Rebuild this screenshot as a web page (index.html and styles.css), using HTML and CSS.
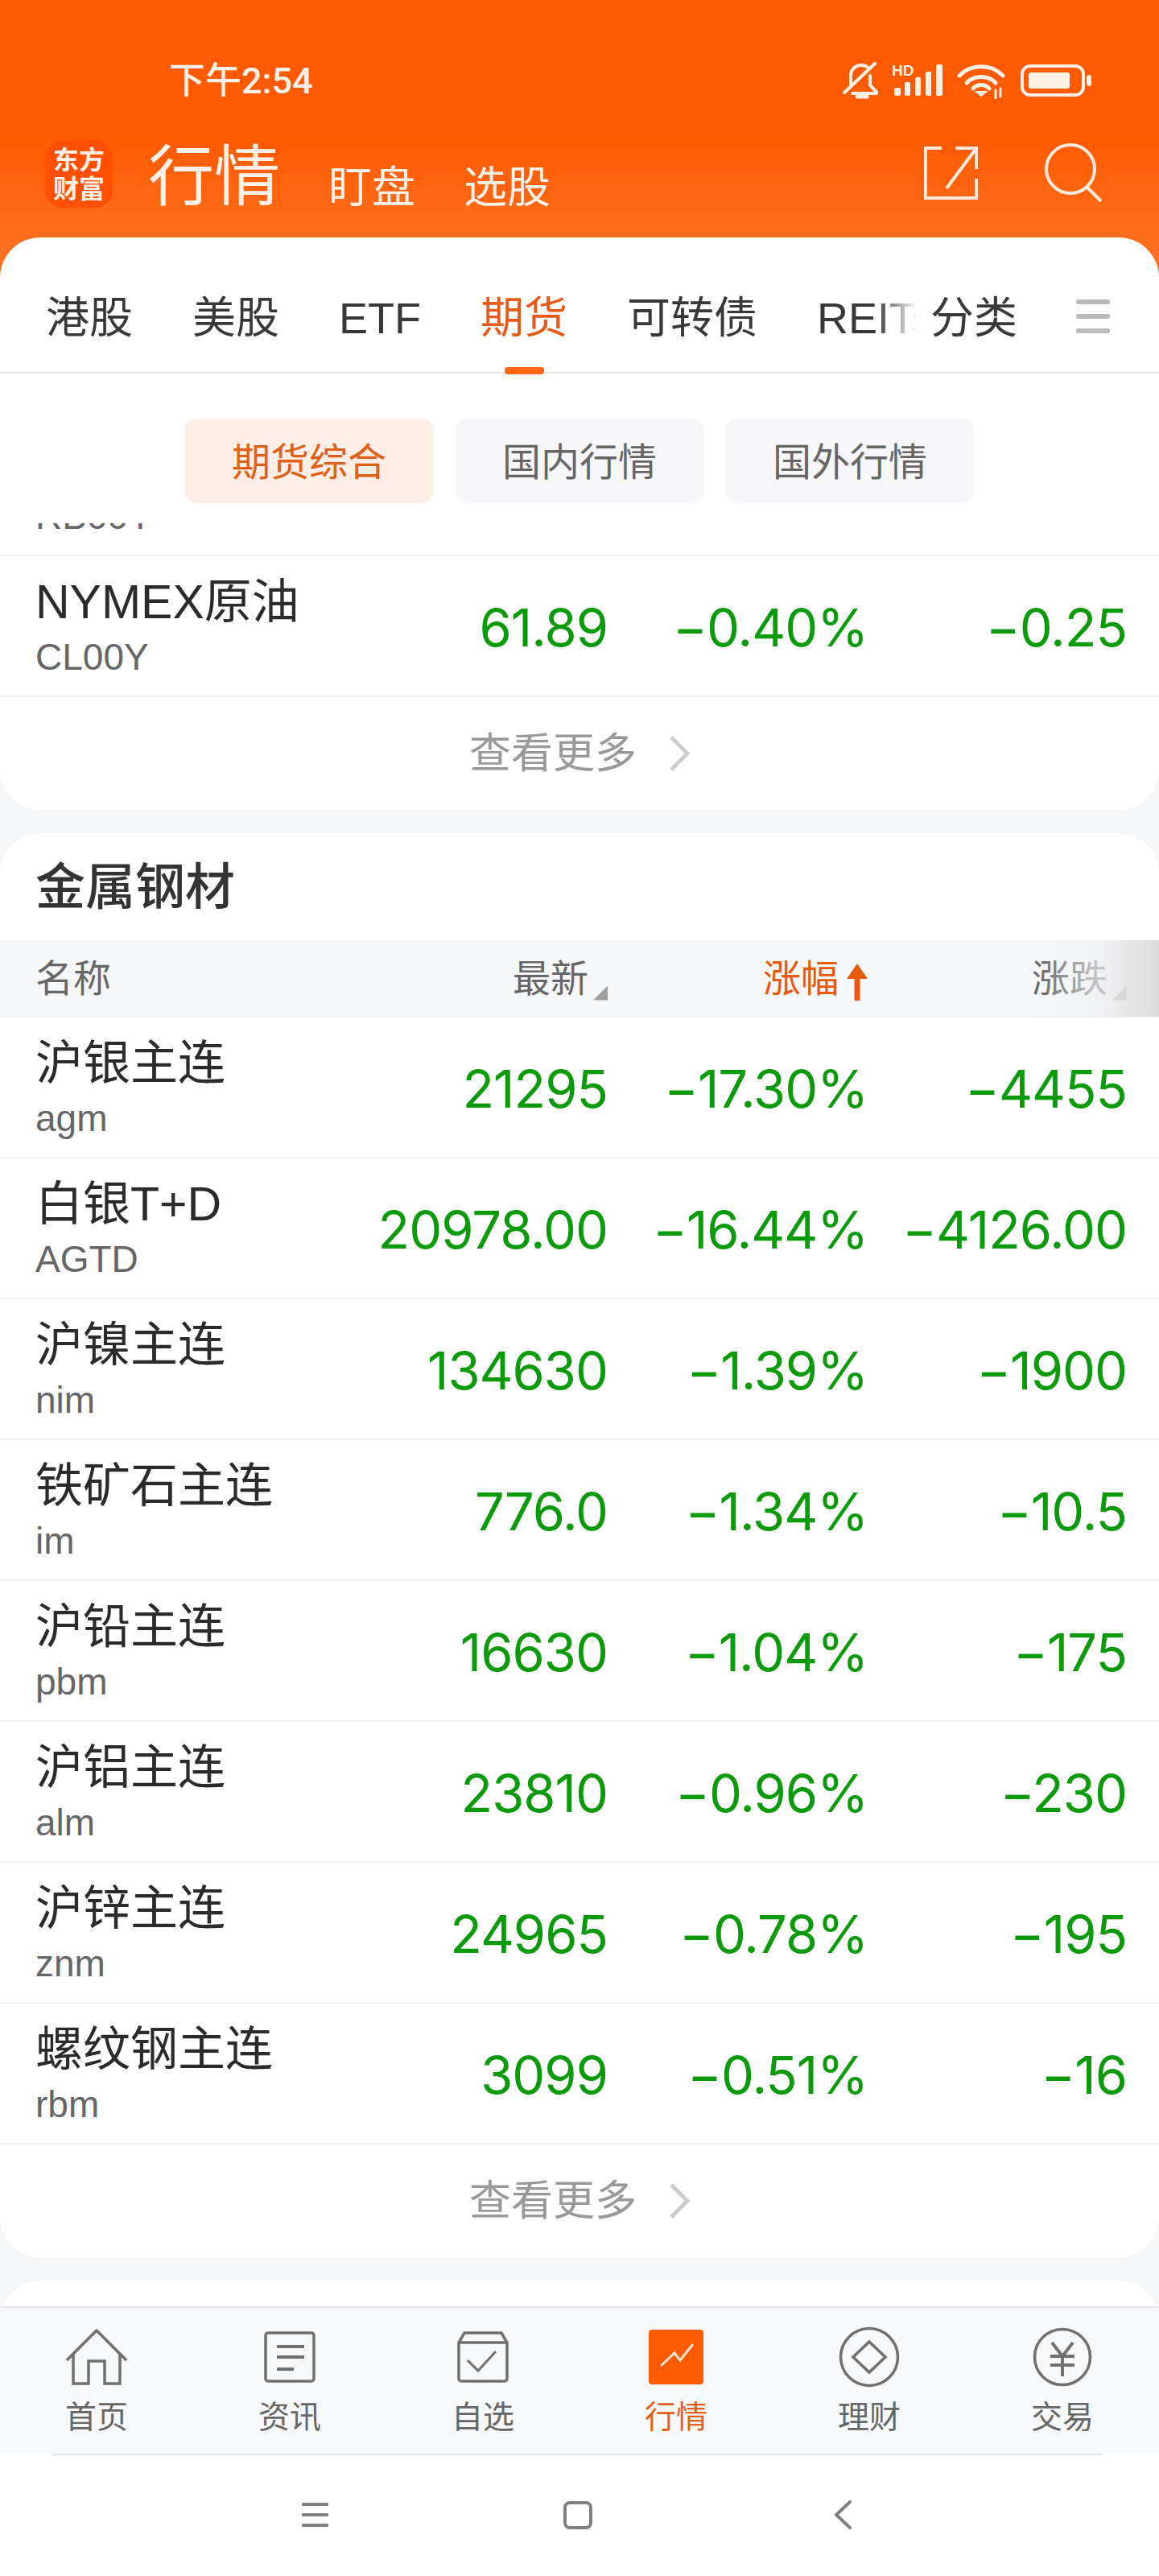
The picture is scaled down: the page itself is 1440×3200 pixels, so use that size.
FILE: index.html
```html
<!DOCTYPE html>
<html lang="zh-CN">
<head>
    <meta charset="UTF-8">
    <meta name="viewport" content="width=device-width, initial-scale=1">
    <title>行情</title>
    <link rel="stylesheet" href="styles.css">
</head>
<body>
<header class="top">
    <div class="status">
        <span class="time">下午2:54</span>
        <div class="status-icons">
            <svg class="ic-bell" width="46" height="48" viewBox="0 0 46 48" fill="none" stroke="#fff0e6" stroke-width="4" stroke-linecap="round" stroke-linejoin="round">
                <path d="M10 29V17C10 9 16 4 23 4c4 0 7 1 9 4M34 17v12l8 8v2H12"/>
                <path d="M40 2L2 38"/>
                <path d="M18 43h12" stroke-width="5"/>
            </svg>
            <svg class="ic-signal" width="66" height="44" viewBox="0 0 66 44">
                <text x="0" y="17" class="hd">HD</text>
                <g fill="#fff0e6">
                    <rect x="3" y="32" width="8" height="10" rx="2"/>
                    <rect x="16" y="25" width="7" height="17" rx="2"/>
                    <rect x="29" y="19" width="7" height="23" rx="2"/>
                    <rect x="42" y="12" width="7" height="30" rx="2"/>
                    <rect x="55" y="3" width="8" height="39" rx="2"/>
                </g>
            </svg>
            <svg class="ic-wifi" width="60" height="46" viewBox="0 0 60 46" fill="none" stroke="#fff0e6" stroke-width="5" stroke-linecap="round">
                <path d="M3 17C17 2 43 2 57 17"/>
                <path d="M12 26C21 16 39 16 48 26"/>
                <path d="M20 33c5-6 15-6 20 0"/>
                <path d="M30 42l-6-5h12z" fill="#fff0e6" stroke-width="2"/>
                <path d="M48 35v10M54 33v10" stroke-width="3"/>
            </svg>
            <svg class="ic-battery" width="88" height="40" viewBox="0 0 88 40">
                <rect x="2" y="2" width="76" height="36" rx="10" fill="none" stroke="#fff0e6" stroke-width="4"/>
                <rect x="10" y="10" width="51" height="20" rx="3" fill="#fff0e6"/>
                <rect x="82" y="13" width="6" height="14" rx="3" fill="#fff0e6"/>
            </svg>
        </div>
    </div>
    <div class="title-row">
        <div class="logo">东方<br>财富</div>
        <h1 class="title">行情</h1>
        <span class="title-link">盯盘</span>
        <span class="title-link">选股</span>
        <svg class="ic-share" width="68" height="68" viewBox="0 0 68 68" fill="none" stroke="#ffe9dc" stroke-width="4">
            <path d="M23 3H3v62h63V41M66 29V3H40"/>
            <path d="M66 3L29 53" stroke-width="4"/>
        </svg>
        <svg class="ic-search" width="74" height="74" viewBox="0 0 74 74" fill="none" stroke="#ffe9dc" stroke-width="4">
            <ellipse cx="33" cy="33" rx="30" ry="30"/>
            <path d="M54 56l17 17"/>
        </svg>
    </div>
</header>

<main class="panel">
    <nav class="tabs">
        <div class="tab-scroll">
            <a class="tab">港股</a>
            <a class="tab">美股</a>
            <a class="tab">ETF</a>
            <a class="tab active">期货</a>
            <a class="tab">可转债</a>
            <a class="tab">REITs</a>
        </div>
        <a class="tab tab-cat">分类</a>
        <div class="tab-menu"><i></i><i></i><i></i></div>
    </nav>
    <div class="subtabs">
        <a class="subtab active">期货综合</a>
        <a class="subtab">国内行情</a>
        <a class="subtab">国外行情</a>
    </div>

    <div class="scroller">
        <section class="card card-first">
            <div class="row">
                <div class="name"><b>螺纹钢主连</b><small>RB00Y</small></div>
                <span>3099</span><span>−0.51%</span><span>−16</span>
            </div>
            <div class="row">
                <div class="name"><b>NYMEX原油</b><small>CL00Y</small></div>
                <span>61.89</span><span>−0.40%</span><span>−0.25</span>
            </div>
            <div class="more">查看更多<svg width="26" height="44" viewBox="0 0 26 44" fill="none" stroke="#ccc" stroke-width="5"><path d="M3 2l20 20L3 42"/></svg></div>
        </section>

        <section class="card">
            <h2 class="card-title">金属钢材</h2>
            <div class="row-head">
                <span class="head-name">名称</span>
                <span class="head-cell">最新<i class="tri"></i></span>
                <span class="head-cell head-on">涨幅<svg class="arrow" width="26" height="46" viewBox="0 0 26 46"><path d="M13 0l13 19H16.500v27h-7V19H0z" fill="#e65a0c"/></svg></span>
                <span class="head-cell">涨跌<i class="tri"></i></span>
            </div>
            <div class="row">
                <div class="name"><b>沪银主连</b><small>agm</small></div>
                <span>21295</span><span>−17.30%</span><span>−4455</span>
            </div>
            <div class="row">
                <div class="name"><b>白银T+D</b><small>AGTD</small></div>
                <span>20978.00</span><span>−16.44%</span><span>−4126.00</span>
            </div>
            <div class="row">
                <div class="name"><b>沪镍主连</b><small>nim</small></div>
                <span>134630</span><span>−1.39%</span><span>−1900</span>
            </div>
            <div class="row">
                <div class="name"><b>铁矿石主连</b><small>im</small></div>
                <span>776.0</span><span>−1.34%</span><span>−10.5</span>
            </div>
            <div class="row">
                <div class="name"><b>沪铅主连</b><small>pbm</small></div>
                <span>16630</span><span>−1.04%</span><span>−175</span>
            </div>
            <div class="row">
                <div class="name"><b>沪铝主连</b><small>alm</small></div>
                <span>23810</span><span>−0.96%</span><span>−230</span>
            </div>
            <div class="row">
                <div class="name"><b>沪锌主连</b><small>znm</small></div>
                <span>24965</span><span>−0.78%</span><span>−195</span>
            </div>
            <div class="row">
                <div class="name"><b>螺纹钢主连</b><small>rbm</small></div>
                <span>3099</span><span>−0.51%</span><span>−16</span>
            </div>
            <div class="more">查看更多<svg width="26" height="44" viewBox="0 0 26 44" fill="none" stroke="#ccc" stroke-width="5"><path d="M3 2l20 20L3 42"/></svg></div>
        </section>

        <section class="card card-next"></section>
    </div>
</main>

<footer class="bottom">
    <a class="bottom-item">
        <svg width="76" height="70" viewBox="0 0 76 70" fill="none" stroke="#707070" stroke-width="3.500" stroke-linejoin="round">
            <path d="M1 39L38 2l37 37"/>
            <path d="M9 31v37h19V40h20v28h19V31" stroke-linejoin="miter"/>
        </svg>
        <span>首页</span>
    </a>
    <a class="bottom-item">
        <svg width="64" height="64" viewBox="0 0 64 64" fill="none" stroke="#707070" stroke-width="3.500">
            <rect x="2" y="2" width="60" height="60" rx="3"/>
            <path d="M16 19h34M16 32h34M16 47h21" stroke-width="4"/>
        </svg>
        <span>资讯</span>
    </a>
    <a class="bottom-item">
        <svg width="66" height="64" viewBox="0 0 66 64" fill="none" stroke="#707070" stroke-width="3.500">
            <path d="M3 14L10 2h46l7 12v45a3 3 0 0 1-3 3H6a3 3 0 0 1-3-3zM3 14h60"/>
            <path d="M14 36l13 13 22-24" stroke-width="3"/>
        </svg>
        <span>自选</span>
    </a>
    <a class="bottom-item active">
        <svg width="68" height="68" viewBox="0 0 68 68">
            <rect width="68" height="68" rx="4" fill="#ff5a00"/>
            <path d="M15 45l17-16 7 9 16-20" fill="none" stroke="#ffe4d2" stroke-width="3"/>
        </svg>
        <span>行情</span>
    </a>
    <a class="bottom-item">
        <svg width="76" height="76" viewBox="0 0 76 76" fill="none" stroke="#707070" stroke-width="3.500">
            <circle cx="38" cy="38" r="35.500"/>
            <path d="M38 19l20 19-20 19-20-19z"/>
        </svg>
        <span>理财</span>
    </a>
    <a class="bottom-item">
        <svg width="74" height="74" viewBox="0 0 74 74" fill="none" stroke="#707070" stroke-width="3.500">
            <circle cx="37" cy="37" r="34.500"/>
            <path d="M24 19l13 17 13-17M22 36h30M22 47h30M37 36v25" stroke-width="4"/>
        </svg>
        <span>交易</span>
    </a>
</footer>
<div class="sys-line"></div>
<div class="sysbar">
    <div class="sys-menu"><i></i><i></i><i></i></div>
    <div class="sys-home"></div>
    <svg class="sys-back" width="22" height="36" viewBox="0 0 22 36" fill="none" stroke="#808080" stroke-width="4" stroke-linecap="round" stroke-linejoin="round"><path d="M20 2L3 18l17 16"/></svg>
</div>
</body>
</html>
```

FILE: styles.css
```css
* {
    box-sizing: border-box;
}

body {
    margin: 0;
    width: 1440px;
    height: 3200px;
    display: flex;
    flex-direction: column;
    background: #fff;
    font-family: "Liberation Sans", "Noto Sans CJK SC", sans-serif;
    overflow: hidden;
}

a {
    text-decoration: none;
    color: inherit;
}

/* orange header */
.top {
    height: 350px;
    flex: none;
    background: linear-gradient(#ff5a00 0, #ff5a00 170px, #ff7020 310px);
    color: #fff1e8;
}

.status {
    height: 174px;
    padding: 77px 84px 0 210px;
    display: flex;
    justify-content: space-between;
    align-items: flex-start;
}

.time {
    font-family: Roboto, "Noto Sans CJK SC", sans-serif;
    font-size: 45px;
    line-height: 48px;
    font-weight: 500;
}

.status-icons {
    display: flex;
    gap: 15px;
    align-items: flex-start;
}

.status-icons svg {
    display: block;
}

.ic-battery {
    margin: 3px 0 0 4px;
}

.hd {
    font: bold 19px "Liberation Sans", sans-serif;
    fill: #fff0e6;
}

.title-row {
    display: flex;
    align-items: flex-start;
    padding-left: 56px;
}

.logo {
    width: 84px;
    height: 84px;
    border-radius: 22px;
    background: #ff4f00;
    font-size: 32px;
    line-height: 36px;
    font-weight: 700;
    text-align: center;
    padding-top: 7px;
    margin-right: 44px;
}

.title {
    margin: 0 60px 0 0;
    font-size: 82px;
    line-height: 92px;
    font-weight: 400;
}

.title-link {
    font-size: 54px;
    line-height: 64px;
    margin: 27px 60px 0 0;
}

.ic-share {
    margin: 7px 0 0 auto;
}

.ic-search {
    margin: 3px 69px 0 82px;
}

/* white panel */
.panel {
    flex: 1;
    min-height: 0;
    margin-top: -55px;
    display: flex;
    flex-direction: column;
    background: #fff;
    border-radius: 50px 50px 0 0;
}

.tabs {
    flex: none;
    height: 169px;
    display: flex;
    align-items: flex-start;
    border-bottom: 2px solid #e6e6e6;
    padding-left: 57px;
}

.tab-scroll {
    width: 1091px;
    height: 170px;
    display: flex;
    gap: 74px;
    overflow: hidden;
    position: relative;
}

.tab-scroll::after {
    content: "";
    position: absolute;
    top: 0;
    bottom: 8px;
    right: 0;
    width: 60px;
    background: linear-gradient(90deg, rgba(255, 255, 255, 0), #fff 85%);
}

.tab {
    flex: none;
    height: 167px;
    padding-top: 33px;
    font-size: 54px;
    line-height: 134px;
    color: #383838;
    position: relative;
}

.tab-cat {
    margin-left: 8px;
}

.tab.active {
    color: #e65a1a;
}

.tab.active::after {
    content: "";
    position: absolute;
    left: 30px;
    width: 49px;
    bottom: -3px;
    height: 9px;
    border-radius: 4px;
    background: #ff6414;
}

.tab-menu {
    margin: 77px 0 0 73px;
    width: 42px;
    display: flex;
    flex-direction: column;
    gap: 12px;
}

.tab-menu i {
    height: 6px;
    border-radius: 2px;
    background: #bbb;
}

.subtabs {
    flex: none;
    height: 186px;
    padding: 56px 0 0 230px;
    display: flex;
    gap: 28px;
}

.subtab {
    width: 308px;
    height: 105px;
    border-radius: 14px;
    background: #f7f7f9;
    color: #666;
    font-size: 48px;
    line-height: 109px;
    text-align: center;
}

.subtab.active {
    background: #ffeee6;
    color: #e0601a;
}

/* scrolling list */
.scroller {
    flex: 1;
    min-height: 0;
    overflow: hidden;
    background: #f6f7f9;
}

.card {
    background: #fff;
    border-radius: 50px;
    margin-bottom: 29px;
}

.card-first {
    margin-top: -134px;
    border-radius: 0 0 50px 50px;
}

.card-next {
    height: 200px;
}

.card-title {
    margin: 0;
    height: 133px;
    padding-left: 44px;
    font-size: 62px;
    line-height: 136px;
    font-weight: 500;
    color: #333;
}

.row-head,
.row {
    display: grid;
    grid-template-columns: 1fr 323px 323px 322px;
    padding: 0 40px 0 44px;
}

.row-head {
    height: 96px;
    align-items: center;
    background: #f6f7f9;
    border-bottom: 1px solid #eee;
    font-size: 47px;
    line-height: 54px;
    color: #666;
    position: relative;
}

.row-head::after {
    content: "";
    position: absolute;
    top: 0;
    bottom: 0;
    right: 0;
    width: 150px;
    background: linear-gradient(90deg, rgba(246, 247, 249, 0), rgba(240, 241, 243, .65) 45%, #dcdcdc);
}

.head-cell {
    display: flex;
    justify-content: flex-end;
    align-items: flex-end;
    gap: 6px;
}

.head-on {
    color: #e65a0c;
    gap: 10px;
}

.tri {
    width: 18px;
    height: 18px;
    background: #a0a0a0;
    clip-path: polygon(100% 0, 100% 100%, 0 100%);
}

.row {
    height: 175px;
    align-items: center;
    border-bottom: 2px solid #eee;
    font-family: Inter, "Liberation Sans", sans-serif;
    font-size: 65px;
    letter-spacing: -1px;
    color: #0a9a0a;
    text-align: right;
}

.row > span {
    padding-top: 3px;
}

.name {
    text-align: left;
    display: flex;
    flex-direction: column;
    white-space: nowrap;
    padding-top: 3px;
    letter-spacing: 0;
    font-family: "Liberation Sans", "Noto Sans CJK SC", sans-serif;
}

.name b {
    font-size: 59px;
    line-height: 68px;
    font-weight: 400;
    color: #2b2b2b;
}

.name small {
    font-size: 46px;
    line-height: 56px;
    padding-top: 6px;
    color: #666;
}

.more {
    height: 140px;
    display: flex;
    justify-content: center;
    align-items: center;
    gap: 40px;
    font-size: 52px;
    line-height: 60px;
    color: #999;
}

/* bottom tab bar */
.bottom {
    flex: none;
    height: 183px;
    display: grid;
    grid-template-columns: repeat(6, 240px);
    background: #f7f8fa;
    border-top: 2px solid #e4e4e6;
}

.bottom-item {
    display: flex;
    flex-direction: column;
    align-items: center;
    color: #666;
    font-size: 39px;
    line-height: 48px;
}

.bottom-item svg {
    height: 76px;
    margin-top: 23px;
    margin-bottom: 13px;
}

.bottom-item.active {
    color: #e0601a;
}

.sys-line {
    flex: none;
    height: 2px;
    margin: 0 71px 0 65px;
    background: #e6e6e8;
}

.sysbar {
    flex: none;
    height: 150px;
    display: flex;
    align-items: center;
    padding: 0 382px 2px 375px;
    justify-content: space-between;
}

.sys-menu {
    width: 33px;
    display: flex;
    flex-direction: column;
    gap: 9px;
}

.sys-menu i {
    height: 4px;
    background: #808080;
    border-radius: 1px;
}

.sys-home {
    width: 36px;
    height: 35px;
    margin-left: -8px;
    border: 4px solid #808080;
    border-radius: 8px;
}
```
